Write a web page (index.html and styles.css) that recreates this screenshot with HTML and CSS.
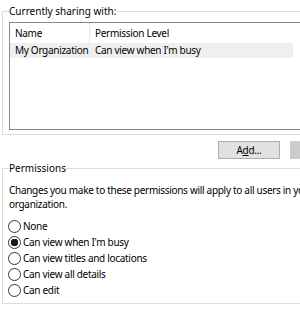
FILE: index.html
```html
<!DOCTYPE html>
<html lang="en">
<head>
    <meta charset="UTF-8">
    <title>Sharing Permissions</title>
    <link rel="stylesheet" href="styles.css">
</head>
<body>
    <div class="dialog">
        <fieldset class="group sharing">
            <legend>Currently sharing with:</legend>
            <div class="listbox">
                <div class="list-row head">
                    <span class="col-name">Name</span>
                    <span class="col-level">Permission Level</span>
                </div>
                <div class="list-row selected">
                    <span class="col-name">My Organization</span>
                    <span class="col-level">Can view when I'm busy</span>
                </div>
            </div>
        </fieldset>

        <div class="actions">
            <button class="btn">A<u>d</u>d...</button>
            <button class="btn" disabled>Remove</button>
        </div>

        <fieldset class="group perms">
            <legend>Permissions</legend>
            <p class="note">Changes you make to these permissions will apply to all users in your organization.</p>
            <label class="opt"><input type="radio" name="level"> None</label>
            <label class="opt"><input type="radio" name="level" checked> Can view when I'm busy</label>
            <label class="opt"><input type="radio" name="level"> Can view titles and locations</label>
            <label class="opt"><input type="radio" name="level"> Can view all details</label>
            <label class="opt"><input type="radio" name="level"> Can edit</label>
        </fieldset>
    </div>
</body>
</html>
```

FILE: styles.css
```css
html, body { margin: 0; padding: 0; background: #fff; overflow: hidden; }
body { font-family: "Noto Sans", sans-serif; font-size: 10px; color: #000; }
.dialog { width: 360px; padding: 3px 0 0 2px; }

.group { border: 1px solid #dcdcdc; margin: 0; padding: 3px 6px 4px 6px; }
.group legend { padding: 0; line-height: 16px; }

/* body text in the dialog runs a bit tighter than the group captions */
.listbox, .btn, .note, .opt { letter-spacing: -0.3px; }

.listbox { border: 1px solid #828790; height: 106px; background: #fff; }
.list-row { display: flex; width: 283px; }
.list-row span { white-space: nowrap; overflow: hidden; }
.list-row .col-name { width: 80px; padding-left: 5px; box-sizing: border-box; }
.list-row .col-level { flex: 1; padding-left: 5px; }
.head { height: 20px; line-height: 20px; }
.head .col-name { border-right: 1px solid #e5e5e5; }
.selected { height: 15px; line-height: 15px; background: #efefef; }

.actions { display: flex; gap: 10px; padding: 6px 0 1px 216px; }
.btn { width: 62px; height: 18px; padding: 0; font-family: inherit; font-size: 10px; line-height: 14px; color: #000; background: #e1e1e1; border: 1px solid #adadad; border-radius: 0; }
.btn:disabled { background: #cccccc; border-color: #cccccc; color: #cccccc; }

.perms { padding: 7px 6px 5px 6px; }
.note { margin: 0 0 7px 0; width: 310px; line-height: 14px; }
.opt { display: flex; align-items: center; height: 16px; white-space: nowrap; }
.opt input { appearance: none; width: 13px; height: 13px; margin: 0 2px 0 -1px; border: 1px solid #333; border-radius: 50%; background: #fff; }
.opt input:checked { background: radial-gradient(circle, #1a1a1a 0 3.5px, #fff 4px); }
```
